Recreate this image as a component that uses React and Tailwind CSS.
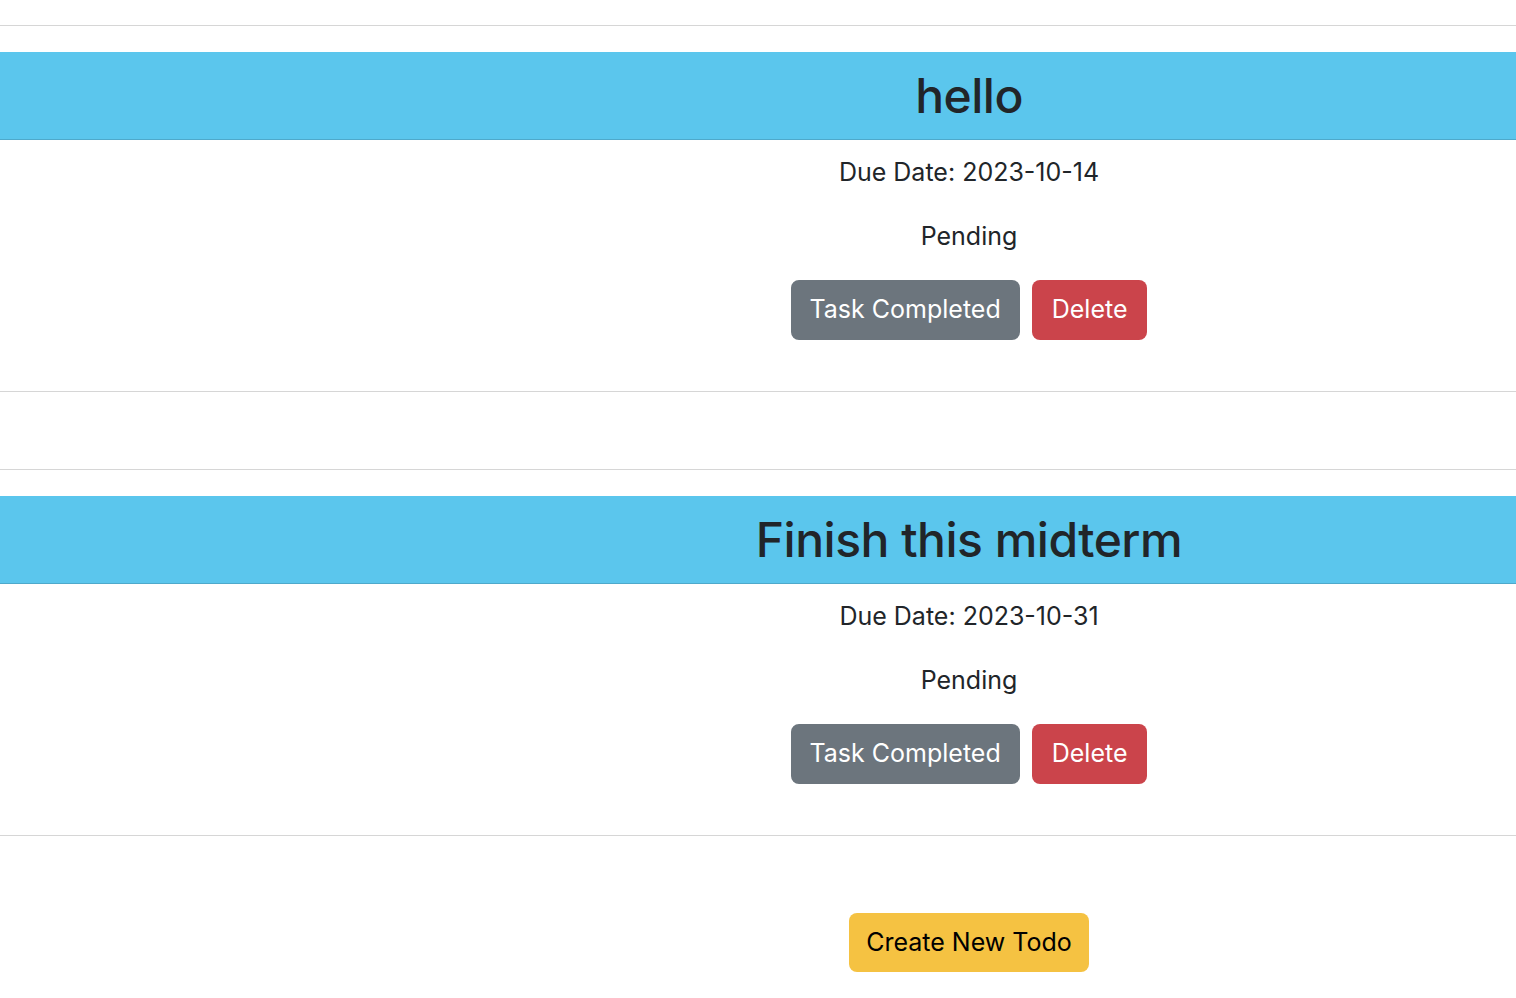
const todos = [
  { id: 1, title: "hello", due: "2023-10-14", status: "Pending" },
  { id: 2, title: "Finish this midterm", due: "2023-10-31", status: "Pending" },
];

const font = { fontFamily: "Inter, 'Noto Sans', sans-serif" };

const TodoCard = ({ todo }) => {
  return (
    <div className="flex flex-col">
      <hr className="border-0 border-t border-[#d6d6d6] mt-[25px]" />
      {/* Card header */}
      <div className="mt-[26px] h-[88px] bg-[#5bc6ed] border-b border-[#4ea9cb] flex items-center">
        <div className="ml-[422px] flex-1 text-center">
          <h2 className="text-[48px] leading-none font-medium text-[#212529] tracking-[-0.5px]">{todo.title}</h2>
        </div>
      </div>
      {/* Card body */}
      <div className="ml-[422px] text-center text-[25px] text-[#212529] pt-[13px] pb-[26px]">
        <p className="leading-[38px] mb-[26px]">Due Date: {todo.due}</p>
        <p className="leading-[38px] mb-[25px]">{todo.status}</p>
        <div className="flex justify-center gap-[12px]">
          <button className="h-[60px] px-[19px] rounded-[8px] bg-[#6c757d] text-white">
            Task Completed
          </button>
          <button className="h-[60px] px-[20px] rounded-[8px] bg-[#cb444b] text-white">
            Delete
          </button>
        </div>
      </div>
      <hr className="border-0 border-t border-[#d6d6d6] mt-[25px]" />
    </div>
  );
};

const App = () => {
  return (
    <div className="min-h-screen bg-white overflow-hidden flex flex-col" style={font}>
      {todos.map((todo, i) => (
        <div key={todo.id} className={i > 0 ? "mt-[52px]" : ""}>
          <TodoCard todo={todo} />
        </div>
      ))}
      <div className="ml-[422px] flex justify-center mt-[77px]">
        <button className="h-[59px] px-[17px] rounded-[8px] bg-[#f5c242] text-black text-[25px]">
          Create New Todo
        </button>
      </div>
    </div>
  );
};

export default App;
